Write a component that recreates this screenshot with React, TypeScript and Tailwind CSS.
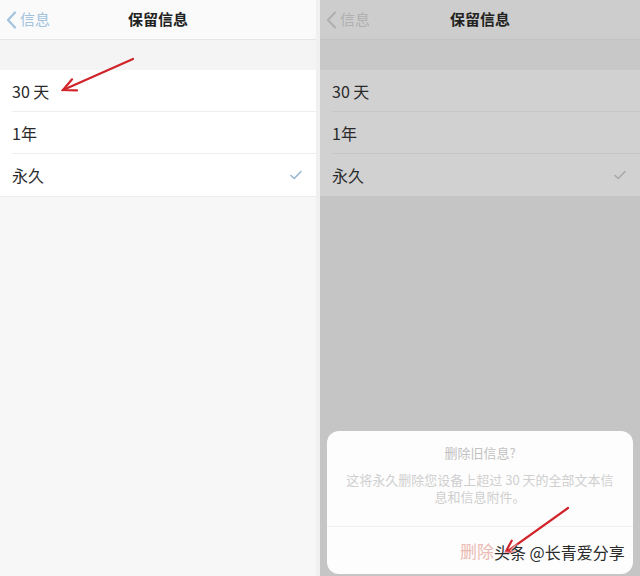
const font = { fontFamily: '"Noto Sans CJK SC", "Noto Sans", sans-serif' };

const rows = ["30 天", "1年", "永久"];

const Check = ({ color }: { color: string }) => (
  <svg width="12" height="10" viewBox="0 0 12 10" fill="none">
    <path d="M1 5.5 L4.2 8.5 L11 1.5" stroke={color} strokeWidth="1.6" strokeLinecap="round" strokeLinejoin="round" />
  </svg>
);

const Arrow = ({ x1, y1, x2, y2 }: { x1: number; y1: number; x2: number; y2: number }) => {
  const ang = Math.atan2(y2 - y1, x2 - x1);
  const len = 14;
  const a1 = ang + Math.PI - 0.45;
  const a2 = ang + Math.PI + 0.45;
  const p1 = `${x2 + len * Math.cos(a1)},${y2 + len * Math.sin(a1)}`;
  const p2 = `${x2 + len * Math.cos(a2)},${y2 + len * Math.sin(a2)}`;
  return (
    <g stroke="#d0232a" strokeWidth="2.2" strokeLinecap="round" fill="none">
      <line x1={x1} y1={y1} x2={x2} y2={y2} />
      <polyline points={`${p1} ${x2},${y2} ${p2}`} />
    </g>
  );
};

const Panel = ({ dim }: { dim: boolean }) => (
  <div className={`flex flex-col h-full ${dim ? "bg-[#c5c5c5]" : "bg-[#f7f7f7]"}`}>
    <div
      className={`relative h-[40px] flex items-center justify-center border-b ${
        dim ? "bg-[#cdcdcd] border-[#c2c2c2]" : "bg-[#fafafa] border-[#e6e6e6]"
      }`}
    >
      <div className={`absolute left-[6px] flex items-center gap-[3px] ${dim ? "text-[#b0b0b0]" : "text-[#a3c2de]"}`}>
        <svg width="11" height="18" viewBox="0 0 11 18" fill="none">
          <path d="M9 1.5 L2 9 L9 16.5" stroke="currentColor" strokeWidth="2.2" strokeLinecap="round" strokeLinejoin="round" />
        </svg>
        <span className="text-[15px]">信息</span>
      </div>
      <span className="text-[15px] font-semibold text-[#222]">保留信息</span>
    </div>
    <div className={`h-[30px] ${dim ? "bg-[#c8c8c8]" : "bg-[#f4f4f4]"}`} />
    <div className={dim ? "bg-[#d1d1d1] border-b border-[#c4c4c4]" : "bg-white border-b border-[#ececec]"}>
      {rows.map((r, i) => (
        <div key={r} className="pl-[12px]">
          <div
            className={`h-[42px] flex items-center justify-between pr-[14px] ${
              i < rows.length - 1 ? (dim ? "border-b border-[#c6c6c6]" : "border-b border-[#eeeeee]") : ""
            }`}
          >
            <span className="text-[16px] text-[#2a2a2a]">{r}</span>
            {i === 2 && <Check color={dim ? "#a8a8a8" : "#9ab6cc"} />}
          </div>
        </div>
      ))}
    </div>
  </div>
);

export default function App() {
  return (
    <div className="relative w-[640px] h-[576px] overflow-hidden flex bg-[#eeeeee]" style={font}>
      <div className="w-[316px] h-full">
        <Panel dim={false} />
      </div>
      <div className="w-[4px] h-full bg-[#f0f0f0]" />
      <div className="relative flex-1 h-full">
        <Panel dim />
        <div className="absolute left-[7px] top-[431px] w-[306px] h-[143px] bg-[#fdfdfd] rounded-[12px] flex flex-col">
          <div className="pt-[12px] text-center text-[13px] text-[#c2c2c2]">删除旧信息?</div>
          <div className="mt-[8px] px-[16px] text-center text-[13px] leading-[17px] text-[#cfcfcf]">
            这将永久删除您设备上超过 30 天的全部文本信息和信息附件。
          </div>
          <div className="mt-auto h-[48px] border-t border-[#efefef] flex items-center justify-center">
            <span className="text-[17px] text-[#ebbbb3] -translate-x-[3px]">删除</span>
          </div>
        </div>
      </div>
      <svg className="absolute inset-0 pointer-events-none" width="640" height="576">
        <Arrow x1={133} y1={59} x2={63} y2={90} />
        <Arrow x1={568} y1={508} x2={505} y2={553} />
      </svg>
      <span
        className="absolute left-[494px] top-[540px] text-[16px] text-[#2a2a2a]"
        style={{ textShadow: "0 0 2px #fff, 0 0 2px #fff, 0 0 3px #fff" }}
      >
        头条 @长青爱分享
      </span>
    </div>
  );
}
